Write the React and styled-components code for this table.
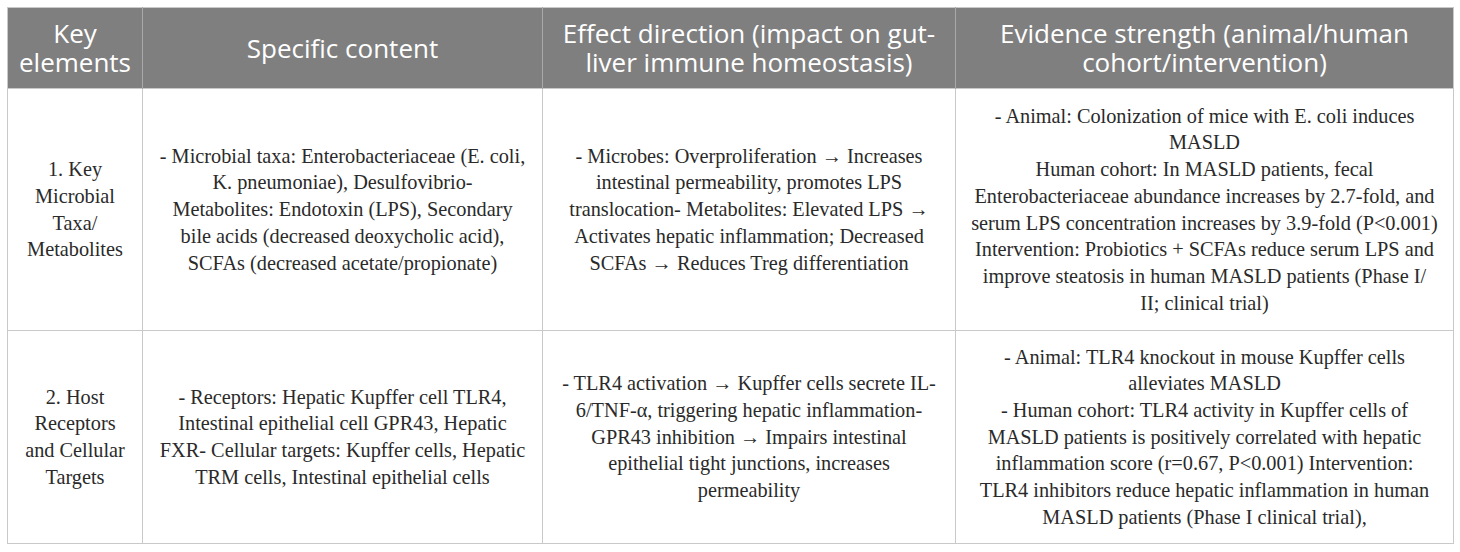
import React from 'react';
import styled, { createGlobalStyle } from 'styled-components';

const GlobalStyle = createGlobalStyle`
  html, body {
    margin: 0;
    padding: 0;
    background: #ffffff;
  }
`;

const Page = styled.div`
  padding: 7px 7px 0 7px;
  width: 1446px;
`;

const Table = styled.table`
  width: 1446px;
  border-collapse: collapse;
  table-layout: fixed;
  border: 1px solid #c9c9c9;
`;

const Col = styled.col`
  width: ${({ $w }) => $w}px;
`;

const HeadCell = styled.th`
  height: 80px;
  padding: 0 10px;
  background: #7f7f7f;
  color: #ffffff;
  font-family: 'Open Sans', 'Noto Sans', sans-serif;
  font-weight: 400;
  font-size: 26px;
  line-height: 29px;
  text-align: center;
  vertical-align: middle;
  border-left: 1px solid #a8a8a8;

  &:first-child {
    border-left: none;
  }
`;

const Row = styled.tr`
  height: ${({ $h }) => $h}px;
  border-top: 1px solid #c9c9c9;
`;

const Cell = styled.td`
  padding: 0 6px;
  border-left: 1px solid #c9c9c9;
  color: #2a2a2a;
  font-family: 'Liberation Serif', 'DejaVu Serif', serif;
  font-size: 20.3px;
  line-height: 26.7px;
  text-align: center;
  vertical-align: middle;
`;

/* one printed line of the source table */
const Line = styled.span`
  display: block;
  white-space: nowrap;
`;

const columns = [
  { w: 135, label: 'Key elements' },
  { w: 400, label: 'Specific content' },
  { w: 413, label: 'Effect direction (impact on gut-liver immune homeostasis)' },
  { w: 498, label: 'Evidence strength (animal/human cohort/intervention)' },
];

const rows = [
  {
    h: 242,
    cells: [
      ['1. Key', 'Microbial', 'Taxa/', 'Metabolites'],
      [
        '- Microbial taxa: Enterobacteriaceae (E. coli,',
        'K. pneumoniae), Desulfovibrio-',
        'Metabolites: Endotoxin (LPS), Secondary',
        'bile acids (decreased deoxycholic acid),',
        'SCFAs (decreased acetate/propionate)',
      ],
      [
        '- Microbes: Overproliferation \u2192 Increases',
        'intestinal permeability, promotes LPS',
        'translocation- Metabolites: Elevated LPS \u2192',
        'Activates hepatic inflammation; Decreased',
        'SCFAs \u2192 Reduces Treg differentiation',
      ],
      [
        '- Animal: Colonization of mice with E. coli induces',
        'MASLD',
        'Human cohort: In MASLD patients, fecal',
        'Enterobacteriaceae abundance increases by 2.7-fold, and',
        'serum LPS concentration increases by 3.9-fold (P<0.001)',
        'Intervention: Probiotics + SCFAs reduce serum LPS and',
        'improve steatosis in human MASLD patients (Phase I/',
        'II; clinical trial)',
      ],
    ],
  },
  {
    h: 213,
    cells: [
      ['2. Host', 'Receptors', 'and Cellular', 'Targets'],
      [
        '- Receptors: Hepatic Kupffer cell TLR4,',
        'Intestinal epithelial cell GPR43, Hepatic',
        'FXR- Cellular targets: Kupffer cells, Hepatic',
        'TRM cells, Intestinal epithelial cells',
      ],
      [
        '- TLR4 activation \u2192 Kupffer cells secrete IL-',
        '6/TNF-\u03b1, triggering hepatic inflammation-',
        'GPR43 inhibition \u2192 Impairs intestinal',
        'epithelial tight junctions, increases',
        'permeability',
      ],
      [
        '- Animal: TLR4 knockout in mouse Kupffer cells',
        'alleviates MASLD',
        '- Human cohort: TLR4 activity in Kupffer cells of',
        'MASLD patients is positively correlated with hepatic',
        'inflammation score (r=0.67, P<0.001) Intervention:',
        'TLR4 inhibitors reduce hepatic inflammation in human',
        'MASLD patients (Phase I clinical trial),',
      ],
    ],
  },
];

export default function App() {
  return (
    <Page>
      <GlobalStyle />
      <Table>
        <colgroup>
          {columns.map((c) => (
            <Col key={c.label} $w={c.w} />
          ))}
        </colgroup>
        <thead>
          <tr>
            {columns.map((c) => (
              <HeadCell key={c.label}>{c.label}</HeadCell>
            ))}
          </tr>
        </thead>
        <tbody>
          {rows.map((r, i) => (
            <Row key={i} $h={r.h}>
              {r.cells.map((lines, j) => (
                <Cell key={j}>
                  {lines.map((t, k) => (
                    <Line key={k}>{t}</Line>
                  ))}
                </Cell>
              ))}
            </Row>
          ))}
        </tbody>
      </Table>
    </Page>
  );
}
